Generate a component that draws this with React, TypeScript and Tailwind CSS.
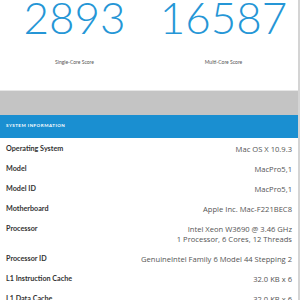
const rows: { label: string; value: string[] }[] = [
  { label: "Operating System", value: ["Mac OS X 10.9.3"] },
  { label: "Model", value: ["MacPro5,1"] },
  { label: "Model ID", value: ["MacPro5,1"] },
  { label: "Motherboard", value: ["Apple Inc. Mac-F221BEC8"] },
  {
    label: "Processor",
    value: ["Intel Xeon W3690 @ 3.46 GHz", "1 Processor, 6 Cores, 12 Threads"],
  },
  { label: "Processor ID", value: ["GenuineIntel Family 6 Model 44 Stepping 2"] },
  { label: "L1 Instruction Cache", value: ["32.0 KB x 6"] },
  { label: "L1 Data Cache", value: ["32.0 KB x 6"] },
];

const App = () => {
  return (
    <div
      className="w-[300px] h-[300px] overflow-hidden bg-white border-r-2 border-[#d4d4d4]"
      style={{ fontFamily: "Lato, 'Liberation Sans', sans-serif" }}
    >
      {/* scores */}
      <div className="grid grid-cols-2 h-[90px]">
        <div className="flex flex-col items-center">
          <div className="text-[44px] leading-none font-light text-[#2596d6] -mt-[5px]">
            2893
          </div>
          <div className="mt-[20px] text-[5px] text-[#555]">Single-Core Score</div>
        </div>
        <div className="flex flex-col items-center">
          <div className="text-[44px] leading-none font-light text-[#2596d6] -mt-[5px]">
            16587
          </div>
          <div className="mt-[20px] text-[5px] text-[#555]">Multi-Core Score</div>
        </div>
      </div>
      <div className="h-px bg-[#e6e6e6]" />
      <div className="h-[24px] bg-[#c4c4c4]" />

      {/* system information */}
      <div className="h-[23px] bg-[#1a8fd1] flex items-center px-[6px]">
        <span className="text-[4.5px] tracking-[0.5px] text-white font-bold">
          SYSTEM INFORMATION
        </span>
      </div>
      <div className="flex flex-col pt-px">
        {rows.map((r) => (
          <div key={r.label} className="flex justify-between px-[6px] py-[5px]">
            <span className="text-[7.2px] leading-[10px] font-bold text-[#333]">
              {r.label}
            </span>
            <div className="flex flex-col items-end">
              {r.value.map((v) => (
                <span
                  key={v}
                  className="text-[7.6px] leading-[10px] text-[#555] font-['Open_Sans',sans-serif]"
                >
                  {v}
                </span>
              ))}
            </div>
          </div>
        ))}
      </div>
    </div>
  );
};

export default App;
